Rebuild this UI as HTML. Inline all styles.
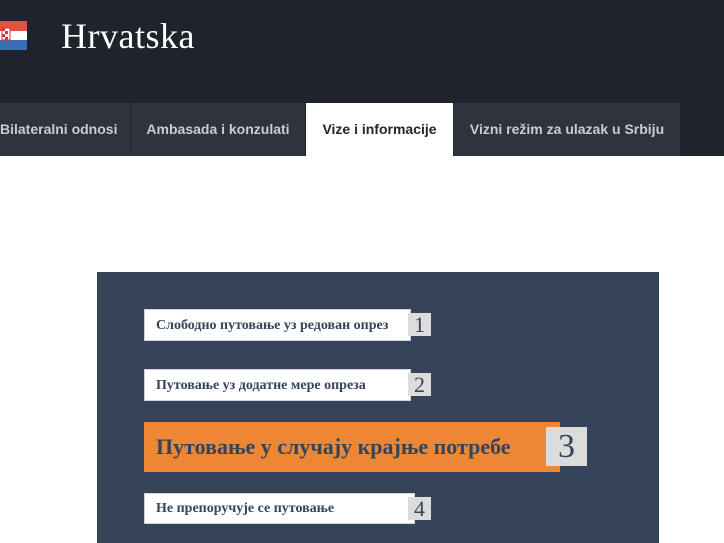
<!DOCTYPE html>
<html><head><meta charset="utf-8"><style>
body{margin:0;width:724px;height:543px;overflow:hidden;background:#fff;position:relative;font-family:"Liberation Sans",sans-serif}
.hdr{position:absolute;left:0;top:0;width:724px;height:103px;background:#1f232b}
.title{position:absolute;left:61px;top:15px;font-family:"Liberation Serif","DejaVu Serif",serif;font-size:36px;letter-spacing:0.5px;color:#fff}
.flag{position:absolute;left:0;top:21px;width:27px;height:29px}
.tabs{position:absolute;top:103px;left:0;height:53px;width:724px;background:#1f232b}
.tab{position:absolute;top:0;height:53px;line-height:53px;background:#2e333e;color:#c9ccd2;font-size:14px;font-weight:bold;text-align:center}
.tab.a{background:#fff;color:#22262e}
.panel{position:absolute;left:97px;top:272px;width:562px;height:271px;background:#36445a}
.b{position:absolute;left:144px;background:#fff;color:#36445a;font-family:"Liberation Serif",serif;font-weight:bold;font-size:14px;padding-left:11px;box-sizing:border-box;border:1px solid #cfd4da;white-space:nowrap}
.n{position:absolute;background:#dcdcdc;color:#36445a;font-family:"Liberation Serif",serif;text-align:center}
</style></head><body>
<div class="hdr">
<svg class="flag" viewBox="0 0 27 29"><rect width="27" height="10" fill="#e2533f"/><rect y="10" width="27" height="9" fill="#fff"/><rect y="19" width="27" height="10" fill="#3a6fb4"/><rect x="2" y="7" width="8" height="12" fill="#fff" stroke="#d33" stroke-width="1"/><rect x="2" y="7" width="3" height="3" fill="#d33"/><rect x="5" y="10" width="3" height="3" fill="#d33"/><rect x="2" y="13" width="3" height="3" fill="#d33"/><rect x="5" y="16" width="3" height="3" fill="#d33"/></svg>
<div class="title">Hrvatska</div>
</div>
<div class="tabs">
<div class="tab" style="left:0;width:130px;text-align:left;padding-left:0">Bilateralni odnosi</div>
<div class="tab" style="left:131px;width:174px">Ambasada i konzulati</div>
<div class="tab a" style="left:306px;width:147px">Vize i informacije</div>
<div class="tab" style="left:454px;width:226px">Vizni režim za ulazak u Srbiju</div>
</div>
<div class="panel"></div>
<div class="b" style="top:309px;width:267px;height:32px;line-height:31px">Слободно путовање уз редован опрез</div>
<div class="n" style="left:408px;top:313px;width:23px;height:23px;font-size:22px;line-height:24px">1</div>
<div class="b" style="top:369px;width:267px;height:32px;line-height:31px">Путовање уз додатне мере опреза</div>
<div class="n" style="left:408px;top:373px;width:23px;height:23px;font-size:22px;line-height:24px">2</div>
<div class="b" style="top:422px;width:416px;height:50px;line-height:48px;background:#ed8733;border-color:#ed8733;font-size:22px">Путовање у случају крајње потребе</div>
<div class="n" style="left:546px;top:427px;width:41px;height:39px;font-size:34px;line-height:40px">3</div>
<div class="b" style="top:493px;width:271px;height:31px;line-height:30px">Не препоручује се путовање</div>
<div class="n" style="left:408px;top:497px;width:23px;height:23px;font-size:22px;line-height:24px">4</div>
</body></html>
